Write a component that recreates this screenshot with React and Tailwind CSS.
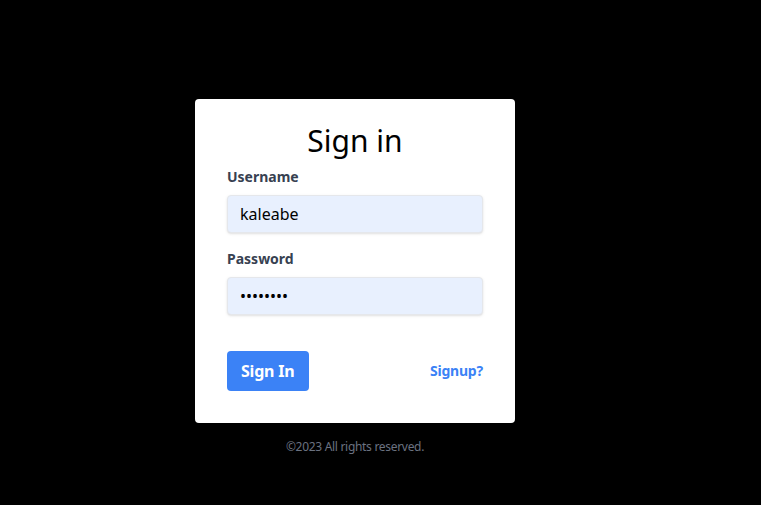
export default function App() {
  return (
    <div className="min-h-[505px] w-full bg-black" style={{ fontFamily: '"Noto Sans", "Open Sans", sans-serif' }}>
      <div className="pt-[99px] pl-[195px] w-[515px]">
        <form className="bg-white shadow-md rounded px-8 pt-6 pb-8 mb-4 w-[320px]" onSubmit={(e) => e.preventDefault()}>
          <h1 className="text-3xl text-center text-black mb-2 leading-9">Sign in</h1>
          <div className="mb-4">
            <label className="block text-[#374151] text-sm font-bold mb-2" htmlFor="username">Username</label>
            <input
              id="username"
              type="text"
              defaultValue="kaleabe"
              className="shadow-sm appearance-none border border-gray-200 rounded w-full py-2 px-3 text-black leading-tight bg-[#e8f0fe] outline-none"
            />
          </div>
          <div className="mb-6">
            <label className="block text-[#374151] text-sm font-bold mb-2" htmlFor="password">Password</label>
            <input
              id="password"
              type="password"
              defaultValue="12345678"
              className="shadow-sm appearance-none border border-gray-200 rounded w-full py-2 px-3 mb-3 text-black leading-tight bg-[#e8f0fe] outline-none"
            />
          </div>
          <div className="flex items-center justify-between">
            <button type="submit" className="bg-[#3b82f6] text-white font-bold py-2 px-[14px] rounded tracking-[-0.2px]">Sign In</button>
            <a href="#" className="inline-block align-baseline font-bold text-sm text-[#3b82f6] tracking-[-0.2px]">Signup?</a>
          </div>
        </form>
        <p className="text-center text-[#6b7280] text-xs tracking-[-0.3px]">©2023 All rights reserved.</p>
      </div>
    </div>
  );
}
